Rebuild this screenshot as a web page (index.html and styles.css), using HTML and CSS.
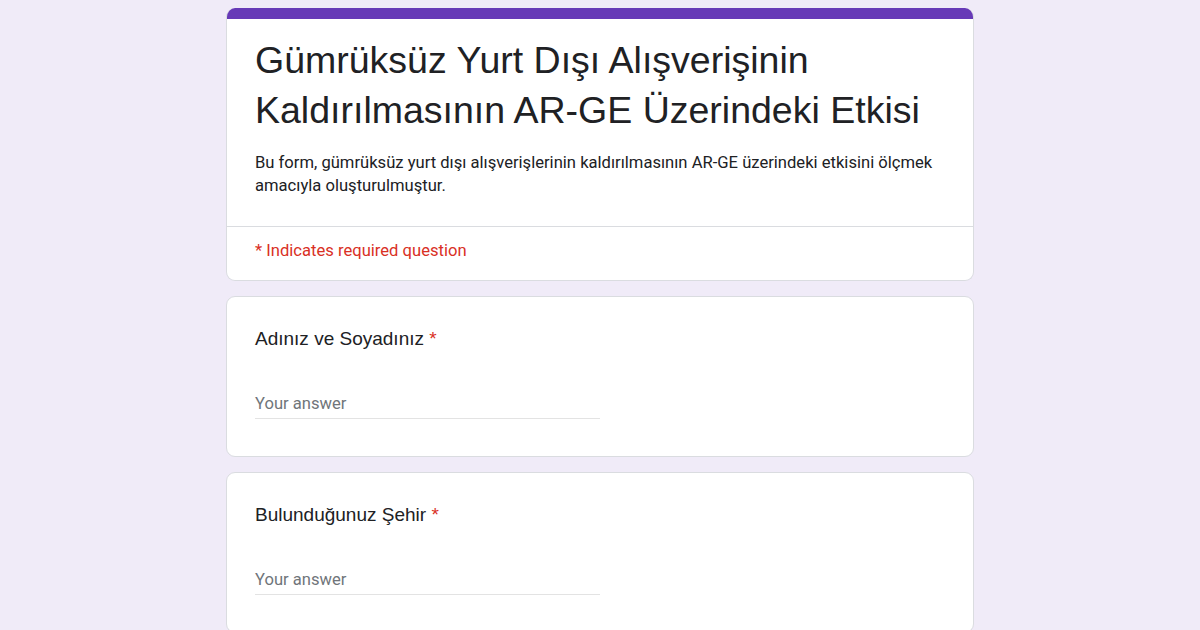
FILE: index.html
```html
<!DOCTYPE html>
<html lang="tr">
<head>
<meta charset="utf-8">
<title>Gümrüksüz Yurt Dışı Alışverişinin Kaldırılmasının AR-GE Üzerindeki Etkisi</title>
<link rel="stylesheet" href="styles.css">
</head>
<body>
<main class="form">
  <section class="card header-card">
    <div class="accent"></div>
    <div class="header-body">
      <h1 class="title">Gümrüksüz Yurt Dışı Alışverişinin Kaldırılmasının AR-GE Üzerindeki Etkisi</h1>
      <p class="description">Bu form, gümrüksüz yurt dışı alışverişlerinin kaldırılmasının AR-GE üzerindeki etkisini ölçmek amacıyla oluşturulmuştur.</p>
    </div>
    <div class="required-note">* Indicates required question</div>
  </section>

  <section class="card question">
    <div class="label">Adınız ve Soyadınız <span class="star">*</span></div>
    <div class="answer"><span class="placeholder">Your answer</span></div>
  </section>

  <section class="card question">
    <div class="label">Bulunduğunuz Şehir <span class="star">*</span></div>
    <div class="answer"><span class="placeholder">Your answer</span></div>
  </section>
</main>
</body>
</html>
```

FILE: styles.css
```css
html, body {
  margin: 0;
  padding: 0;
  background: #f0ebf8;
  height: 100%;
  overflow: hidden;
}

.form {
  width: 748px;
  margin: 8px auto 0;
  display: flex;
  flex-direction: column;
  gap: 15px;
}

.card {
  background: #ffffff;
  border: 1px solid #dadce0;
  border-radius: 9px;
  box-sizing: border-box;
}

.header-card {
  border-top: none;
  overflow: hidden;
}

.accent {
  height: 11px;
  background: #673ab7;
  margin: 0 -1px;
}

.header-body {
  padding: 16px 28px 29px;
  border-bottom: 1px solid #dadce0;
}

.title {
  margin: 0;
  font-family: "Liberation Sans", Arial, sans-serif;
  font-weight: 400;
  font-size: 37.5px;
  line-height: 50px;
  color: #202124;
}

.description {
  margin: 16px 0 0;
  font-family: Roboto, "Liberation Sans", sans-serif;
  font-size: 16.6px;
  line-height: 23px;
  color: #202124;
}

.required-note {
  padding: 12px 28px 18px;
  font-family: Roboto, "Liberation Sans", sans-serif;
  font-size: 16.6px;
  line-height: 23px;
  color: #d93025;
}

.question {
  padding: 30px 28px 37px;
}

.label {
  font-family: "Liberation Sans", Arial, sans-serif;
  font-size: 19px;
  line-height: 24px;
  color: #202124;
}

.star {
  color: #d93025;
}

.answer {
  margin-top: 41px;
  width: 50%;
  padding-bottom: 3px;
  border-bottom: 1px solid #e3e3e3;
  font-family: Roboto, "Liberation Sans", sans-serif;
  font-size: 16.6px;
  line-height: 23px;
}

.placeholder {
  color: #70757a;
}
```
